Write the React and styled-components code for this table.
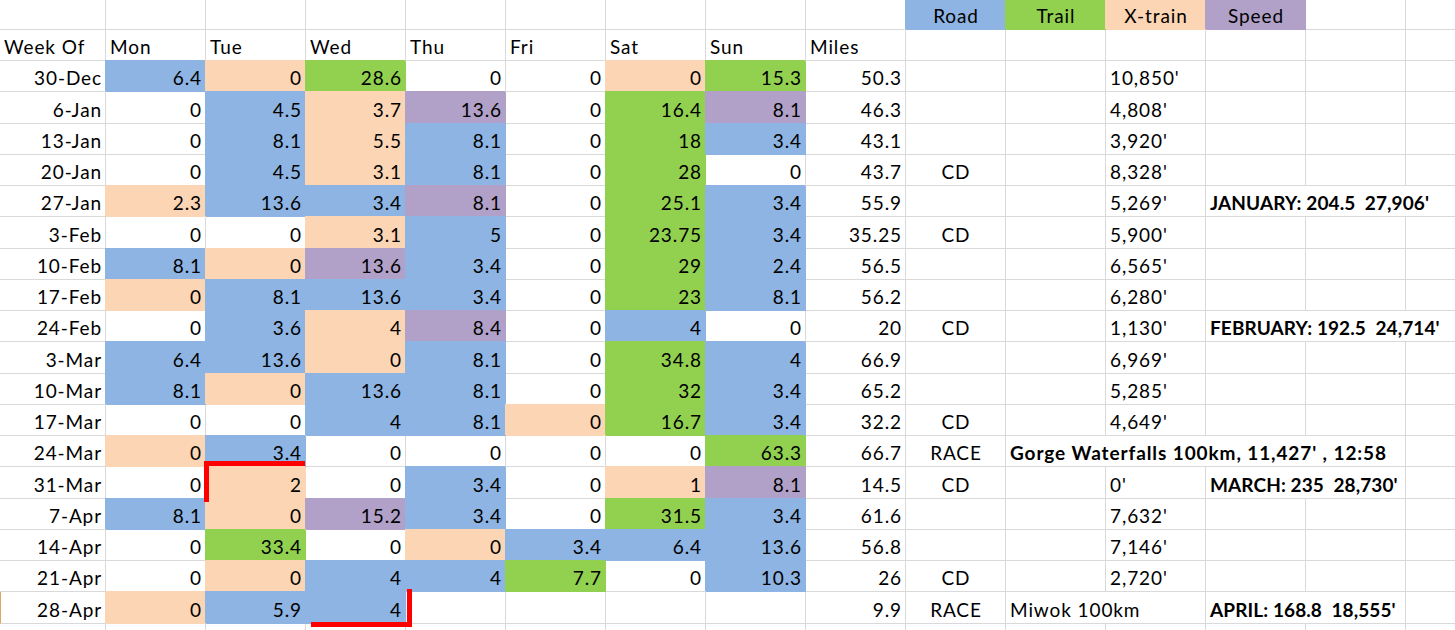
import React from 'react';
import styled, { createGlobalStyle } from 'styled-components';

const Global = createGlobalStyle`
  html, body { margin: 0; padding: 0; background: #fff; overflow: hidden; }
  body { width: 1455px; height: 630px; }
`;

const FILLS = { b: '#8DB4E2', g: '#92D050', x: '#FCD5B4', p: '#B1A0C7' };
const GRID = '#d9d9d9';

const Sheet = styled.div`
  position: relative;
  display: grid;
  grid-template-columns: 106px repeat(14, 100px);
  grid-template-rows: 30px 31px repeat(19, 31.25px);
  width: 1455px;
  height: 630px;
  overflow: hidden;
  font-family: Lato, "Liberation Sans", sans-serif;
  font-size: 19px;
  letter-spacing: 0.9px;
  color: #000;
`;

const Cell = styled.div`
  box-sizing: border-box;
  display: flex;
  align-items: flex-end;
  justify-content: ${(p) =>
    p.$align === 'right' ? 'flex-end' : p.$align === 'center' ? 'center' : 'flex-start'};
  padding: 0 3px 4px 4px;
  grid-column: span ${(p) => p.$span || 1};
  background: ${(p) => (p.$fill ? FILLS[p.$fill] : '#fff')};
  border-right: 1px solid ${(p) => (p.$fill ? FILLS[p.$fill] : GRID)};
  border-bottom: 1px solid ${(p) => (p.$fill ? FILLS[p.$fill] : GRID)};
  box-shadow: ${(p) => (p.$fill ? `-1px -1px 0 0 ${FILLS[p.$fill]}` : 'none')};
  border-left: ${(p) => (p.$mark ? '1px solid #E2A55A' : 'none')};
  font-weight: ${(p) => (p.$bold ? 700 : 400)};
  letter-spacing: ${(p) => (p.$summary ? '0.1px' : 'inherit')};
  white-space: pre;
  line-height: 1;
  overflow: visible;
`;

const Bracket = styled.div`
  position: absolute;
  box-sizing: border-box;
  pointer-events: none;
  border-color: #ff0000;
  border-style: solid;
  border-width: ${(p) => (p.$open === 'topleft' ? '5px 0 0 5px' : '0 5px 5px 0')};
`;

const TYPE_HEADERS = [
  { t: 'Road', f: 'b' },
  { t: 'Trail', f: 'g' },
  { t: 'X-train', f: 'x' },
  { t: 'Speed', f: 'p' },
];

const DAY_HEADERS = ['Week Of', 'Mon', 'Tue', 'Wed', 'Thu', 'Fri', 'Sat', 'Sun', 'Miles'];

const ROWS = [
  { w: '30-Dec', d: [['6.4', 'b'], ['0', 'x'], ['28.6', 'g'], ['0'], ['0'], ['0', 'x'], ['15.3', 'g']], m: '50.3', x: "10,850'" },
  { w: '6-Jan', d: [['0'], ['4.5', 'b'], ['3.7', 'x'], ['13.6', 'p'], ['0'], ['16.4', 'g'], ['8.1', 'p']], m: '46.3', x: "4,808'" },
  { w: '13-Jan', d: [['0'], ['8.1', 'b'], ['5.5', 'x'], ['8.1', 'b'], ['0'], ['18', 'g'], ['3.4', 'b']], m: '43.1', x: "3,920'" },
  { w: '20-Jan', d: [['0'], ['4.5', 'b'], ['3.1', 'x'], ['8.1', 'b'], ['0'], ['28', 'g'], ['0']], m: '43.7', r: 'CD', x: "8,328'" },
  { w: '27-Jan', d: [['2.3', 'x'], ['13.6', 'b'], ['3.4', 'b'], ['8.1', 'p'], ['0'], ['25.1', 'g'], ['3.4', 'b']], m: '55.9', x: "5,269'", s: "JANUARY: 204.5  27,906'", ss: 3 },
  { w: '3-Feb', d: [['0'], ['0'], ['3.1', 'x'], ['5', 'b'], ['0'], ['23.75', 'g'], ['3.4', 'b']], m: '35.25', r: 'CD', x: "5,900'" },
  { w: '10-Feb', d: [['8.1', 'b'], ['0', 'x'], ['13.6', 'p'], ['3.4', 'b'], ['0'], ['29', 'g'], ['2.4', 'b']], m: '56.5', x: "6,565'" },
  { w: '17-Feb', d: [['0', 'x'], ['8.1', 'b'], ['13.6', 'b'], ['3.4', 'b'], ['0'], ['23', 'g'], ['8.1', 'b']], m: '56.2', x: "6,280'" },
  { w: '24-Feb', d: [['0'], ['3.6', 'b'], ['4', 'x'], ['8.4', 'p'], ['0'], ['4', 'b'], ['0']], m: '20', r: 'CD', x: "1,130'", s: "FEBRUARY: 192.5  24,714'", ss: 3 },
  { w: '3-Mar', d: [['6.4', 'b'], ['13.6', 'b'], ['0', 'x'], ['8.1', 'b'], ['0'], ['34.8', 'g'], ['4', 'b']], m: '66.9', x: "6,969'" },
  { w: '10-Mar', d: [['8.1', 'b'], ['0', 'x'], ['13.6', 'b'], ['8.1', 'b'], ['0'], ['32', 'g'], ['3.4', 'b']], m: '65.2', x: "5,285'" },
  { w: '17-Mar', d: [['0'], ['0'], ['4', 'b'], ['8.1', 'b'], ['0', 'x'], ['16.7', 'g'], ['3.4', 'b']], m: '32.2', r: 'CD', x: "4,649'" },
  { w: '24-Mar', d: [['0', 'x'], ['3.4', 'b'], ['0'], ['0'], ['0'], ['0'], ['63.3', 'g']], m: '66.7', r: 'RACE', race: "Gorge Waterfalls 100km, 11,427' , 12:58", raceBold: true, raceSpan: 4 },
  { w: '31-Mar', d: [['0'], ['2', 'x'], ['0'], ['3.4', 'b'], ['0'], ['1', 'x'], ['8.1', 'p']], m: '14.5', r: 'CD', x: "0'", s: "MARCH: 235  28,730'", ss: 2 },
  { w: '7-Apr', d: [['8.1', 'b'], ['0', 'x'], ['15.2', 'p'], ['3.4', 'b'], ['0'], ['31.5', 'g'], ['3.4', 'b']], m: '61.6', x: "7,632'" },
  { w: '14-Apr', d: [['0'], ['33.4', 'g'], ['0'], ['0', 'x'], ['3.4', 'b'], ['6.4', 'b'], ['13.6', 'b']], m: '56.8', x: "7,146'" },
  { w: '21-Apr', d: [['0'], ['0', 'x'], ['4', 'b'], ['4', 'b'], ['7.7', 'g'], ['0'], ['10.3', 'b']], m: '26', r: 'CD', x: "2,720'" },
  { w: '28-Apr', d: [['0', 'x'], ['5.9', 'b'], ['4', 'b'], [''], [''], [''], ['']], m: '9.9', r: 'RACE', race: 'Miwok 100km', raceSpan: 2, s: "APRIL: 168.8  18,555'", ss: 2, mark: true },
];

function renderRow(row, i) {
  const cells = [];
  const k = (n) => `r${i}-${n}`;
  cells.push(
    <Cell key={k('w')} $align="right" $mark={row.mark}>
      {row.w}
    </Cell>
  );
  row.d.forEach(([v, f], j) => {
    cells.push(
      <Cell key={k('d' + j)} $align="right" $fill={f}>
        {v}
      </Cell>
    );
  });
  cells.push(
    <Cell key={k('m')} $align="right">
      {row.m}
    </Cell>
  );
  cells.push(
    <Cell key={k('r')} $align="center">
      {row.r || ''}
    </Cell>
  );
  let used = 10;
  if (row.race) {
    cells.push(
      <Cell key={k('race')} $span={row.raceSpan} $bold={row.raceBold}>
        {row.race}
      </Cell>
    );
    used += row.raceSpan;
  } else {
    cells.push(<Cell key={k('t')} />);
    cells.push(<Cell key={k('x')}>{row.x}</Cell>);
    used += 2;
  }
  if (row.s) {
    cells.push(
      <Cell key={k('s')} $span={row.ss} $bold $summary>
        {row.s}
      </Cell>
    );
    used += row.ss;
  }
  for (let c = used; c < 15; c++) cells.push(<Cell key={k('e' + c)} />);
  return cells;
}

export default function App() {
  const cells = [];
  for (let c = 0; c < 9; c++) cells.push(<Cell key={`h1-${c}`} />);
  TYPE_HEADERS.forEach((h) =>
    cells.push(
      <Cell key={`h1-${h.t}`} $align="center" $fill={h.f}>
        {h.t}
      </Cell>
    )
  );
  cells.push(<Cell key="h1-13" />);
  cells.push(<Cell key="h1-14" />);
  DAY_HEADERS.forEach((h) => cells.push(<Cell key={`h2-${h}`}>{h}</Cell>));
  for (let c = 9; c < 15; c++) cells.push(<Cell key={`h2-${c}`} />);
  ROWS.forEach((r, i) => cells.push(...renderRow(r, i)));
  for (let c = 0; c < 15; c++) cells.push(<Cell key={`tail-${c}`} />);

  return (
    <>
      <Global />
      <Sheet>
        {cells}
        <Bracket $open="topleft" style={{ left: 204, top: 461, width: 101, height: 41 }} />
        <Bracket $open="bottomright" style={{ left: 311, top: 589, width: 101, height: 38 }} />
      </Sheet>
    </>
  );
}
